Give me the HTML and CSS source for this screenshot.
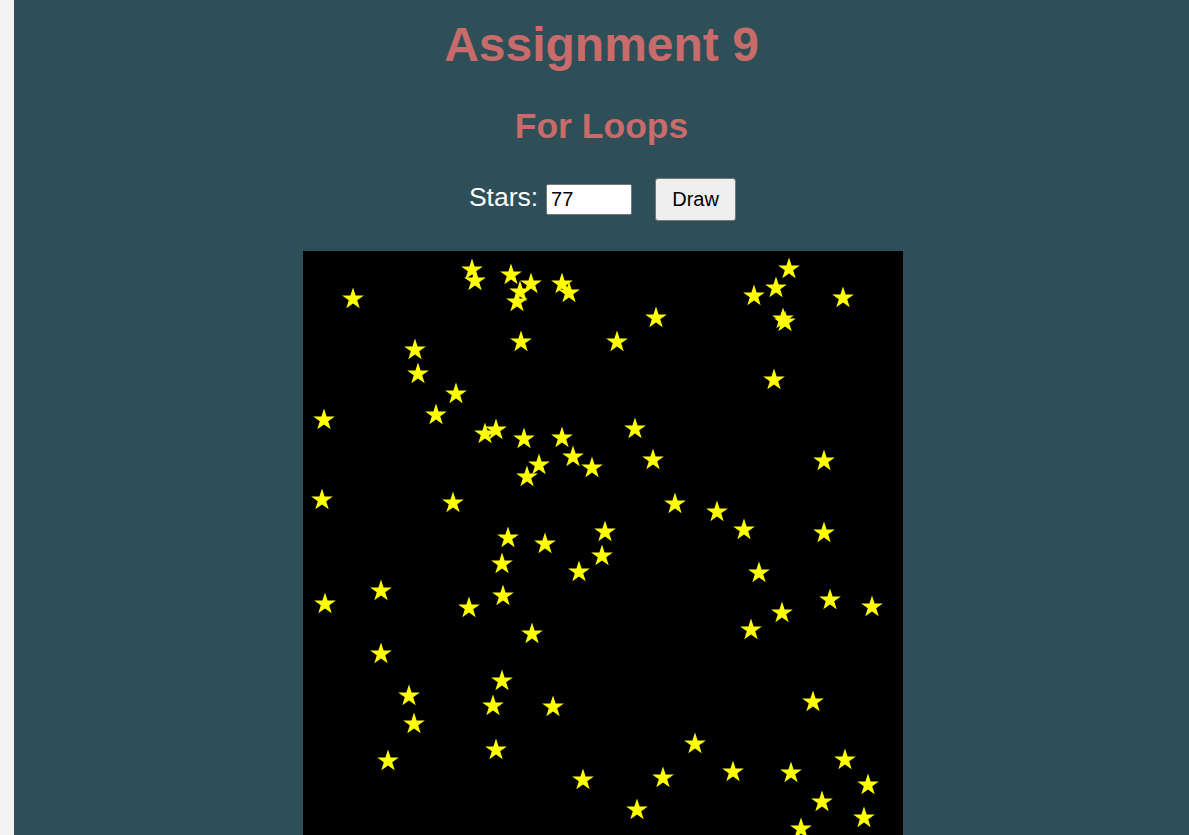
FILE: index.html
```html
<!DOCTYPE html>
<html lang="en">
<head>
<meta charset="utf-8">
<title>Assignment 9</title>
<link rel="stylesheet" href="styles.css">
</head>
<body>
<main class="page">
  <h1 class="title">Assignment 9</h1>
  <h2 class="subtitle">For Loops</h2>
  <div class="controls">
    <label class="label" for="stars">Stars:</label>
    <input class="count" id="stars" type="text" value="77">
    <button class="draw" type="button">Draw</button>
  </div>
  <div class="canvas-row">
    <div class="canvas">
      <svg width="600" height="600" viewBox="0 0 600 600" xmlns="http://www.w3.org/2000/svg">
        <defs>
          <polygon id="s" points="0,-11.4 2.6,-3.55 10.84,-3.52 4.2,1.37 6.7,9.22 0,4.42 -6.7,9.22 -4.2,1.37 -10.84,-3.52 -2.6,-3.55" fill="#ffff00"/>
        </defs>
        <g transform="translate(0,1)">
          <use href="#s" x="169" y="18"/><use href="#s" x="172" y="29"/><use href="#s" x="50" y="47"/><use href="#s" x="208" y="23"/>
          <use href="#s" x="228" y="32"/><use href="#s" x="217" y="40"/><use href="#s" x="214" y="50"/><use href="#s" x="259" y="32"/>
          <use href="#s" x="266" y="41"/><use href="#s" x="218" y="90"/><use href="#s" x="112" y="98"/><use href="#s" x="115" y="122"/>
          <use href="#s" x="153" y="142"/><use href="#s" x="133" y="163"/><use href="#s" x="21" y="168"/><use href="#s" x="182" y="182"/>
          <use href="#s" x="193" y="178"/><use href="#s" x="221" y="187"/><use href="#s" x="259" y="186"/>
          <use href="#s" x="486" y="17"/><use href="#s" x="473" y="36"/><use href="#s" x="451" y="44"/><use href="#s" x="540" y="46"/>
          <use href="#s" x="353" y="66"/><use href="#s" x="480" y="67"/><use href="#s" x="482" y="70"/><use href="#s" x="314" y="90"/>
          <use href="#s" x="471" y="128"/><use href="#s" x="332" y="177"/>
          <use href="#s" x="270" y="205"/><use href="#s" x="236" y="213"/><use href="#s" x="289" y="216"/><use href="#s" x="224" y="225"/>
          <use href="#s" x="19" y="248"/><use href="#s" x="150" y="251"/><use href="#s" x="205" y="286"/><use href="#s" x="242" y="292"/>
          <use href="#s" x="199" y="312"/><use href="#s" x="276" y="320"/><use href="#s" x="78" y="339"/><use href="#s" x="200" y="344"/>
          <use href="#s" x="22" y="352"/><use href="#s" x="166" y="356"/><use href="#s" x="229" y="382"/>
          <use href="#s" x="350" y="208"/><use href="#s" x="521" y="209"/><use href="#s" x="372" y="252"/><use href="#s" x="414" y="260"/>
          <use href="#s" x="441" y="278"/><use href="#s" x="521" y="281"/><use href="#s" x="302" y="280"/><use href="#s" x="299" y="304"/>
          <use href="#s" x="456" y="321"/><use href="#s" x="527" y="348"/><use href="#s" x="479" y="361"/><use href="#s" x="569" y="355"/>
          <use href="#s" x="448" y="378"/>
          <use href="#s" x="78" y="402"/><use href="#s" x="199" y="429"/><use href="#s" x="106" y="444"/><use href="#s" x="190" y="454"/>
          <use href="#s" x="250" y="455"/><use href="#s" x="111" y="472"/><use href="#s" x="193" y="498"/><use href="#s" x="85" y="509"/>
          <use href="#s" x="280" y="528"/>
          <use href="#s" x="510" y="450"/><use href="#s" x="392" y="492"/><use href="#s" x="542" y="508"/><use href="#s" x="360" y="526"/>
          <use href="#s" x="430" y="520"/><use href="#s" x="488" y="521"/><use href="#s" x="565" y="533"/><use href="#s" x="519" y="550"/>
          <use href="#s" x="334" y="558"/><use href="#s" x="561" y="566"/><use href="#s" x="498" y="577"/>
        </g>
      </svg>
    </div>
  </div>
</main>
</body>
</html>
```
FILE: styles.css
```css
html, body {
  margin: 0;
  padding: 0;
}

body {
  background: #f3f3f3;
  font-family: "Liberation Sans", Arial, sans-serif;
}

.page {
  margin-left: 14px;
  min-height: 100vh;
  background: #2e4f57;
  padding: 17px 0 30px;
  box-sizing: border-box;
  text-align: center;
}

.title {
  margin: 0;
  font-size: 48px;
  line-height: 56px;
  font-weight: bold;
  color: #c96b6b;
}

.subtitle {
  margin: 33px 0 0;
  font-size: 35.5px;
  line-height: 40px;
  font-weight: bold;
  color: #c96b6b;
}

.controls {
  margin-top: 32px;
  padding-left: 2px;
  display: flex;
  justify-content: center;
  align-items: baseline;
}

.label {
  font-size: 26.5px;
  line-height: 30px;
  color: #ffffff;
  margin-right: 8px;
}

.count {
  box-sizing: border-box;
  width: 86px;
  height: 31px;
  padding: 3px 4px;
  margin: 0 23px 0 0;
  border: 1px solid #767676;
  border-radius: 2px;
  background: #ffffff;
  color: #000000;
  font-family: "Liberation Sans", Arial, sans-serif;
  font-size: 20px;
  line-height: 23px;
}

.draw {
  box-sizing: border-box;
  width: 81px;
  height: 43px;
  padding: 9px 0;
  margin: 0;
  border: 1px solid #767676;
  border-radius: 3px;
  background: #efefef;
  color: #000000;
  font-family: "Liberation Sans", Arial, sans-serif;
  font-size: 20px;
  line-height: 23px;
}

.canvas-row {
  margin-top: 30px;
  display: flex;
  justify-content: center;
  padding-left: 3px;
}

.canvas {
  width: 600px;
  height: 600px;
  background: #000000;
}

.canvas svg {
  display: block;
}
```
